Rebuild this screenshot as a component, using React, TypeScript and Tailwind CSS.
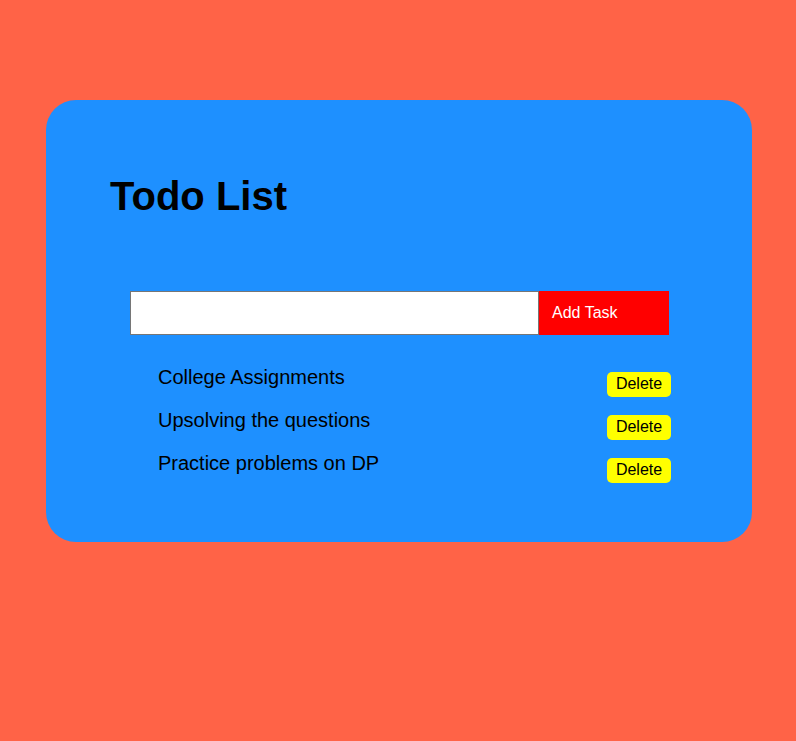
import React, { useState } from "react";

const initialTasks = [
  "College Assignments",
  "Upsolving the questions",
  "Practice problems on DP",
];

export default function App() {
  const [tasks, setTasks] = useState(initialTasks);
  const [text, setText] = useState("");

  const addTask = () => {
    if (!text.trim()) return;
    setTasks([...tasks, text.trim()]);
    setText("");
  };

  return (
    <div className="min-h-screen w-full bg-[#FF6347] pt-[100px] pl-[46px] font-['Liberation_Sans',Arial,sans-serif]">
      <div className="w-[706px] h-[442px] rounded-[30px] bg-[#1E90FF] pt-[73px]">
        {/* Title */}
        <h1 className="ml-[64px] text-[40px] leading-[46px] font-bold text-black">Todo List</h1>

        {/* Input row */}
        <div className="mt-[72px] ml-[84px] flex h-[44px] w-[539px]">
          <input
            value={text}
            onChange={(e) => setText(e.target.value)}
            className="h-full flex-1 border border-[#767676] bg-white px-2 text-base outline-none"
          />
          <button
            onClick={addTask}
            className="h-full w-[130px] bg-[#FF0000] pl-[13px] text-left text-base text-white"
          >
            Add Task
          </button>
        </div>

        {/* Tasks */}
        <ul className="mt-[31px] ml-[112px] w-[513px]">
          {tasks.map((t, i) => (
            <li key={i} className="flex h-[43px] items-start justify-between">
              <span className="text-[20px] leading-[23px] text-black">{t}</span>
              <button
                onClick={() => setTasks(tasks.filter((_, j) => j !== i))}
                className="mt-[6px] flex h-[25px] w-[64px] items-center justify-center rounded-[5px] bg-[#FFFF00] pb-[2px] text-base leading-[18px] text-black"
              >
                Delete
              </button>
            </li>
          ))}
        </ul>
      </div>
    </div>
  );
}
